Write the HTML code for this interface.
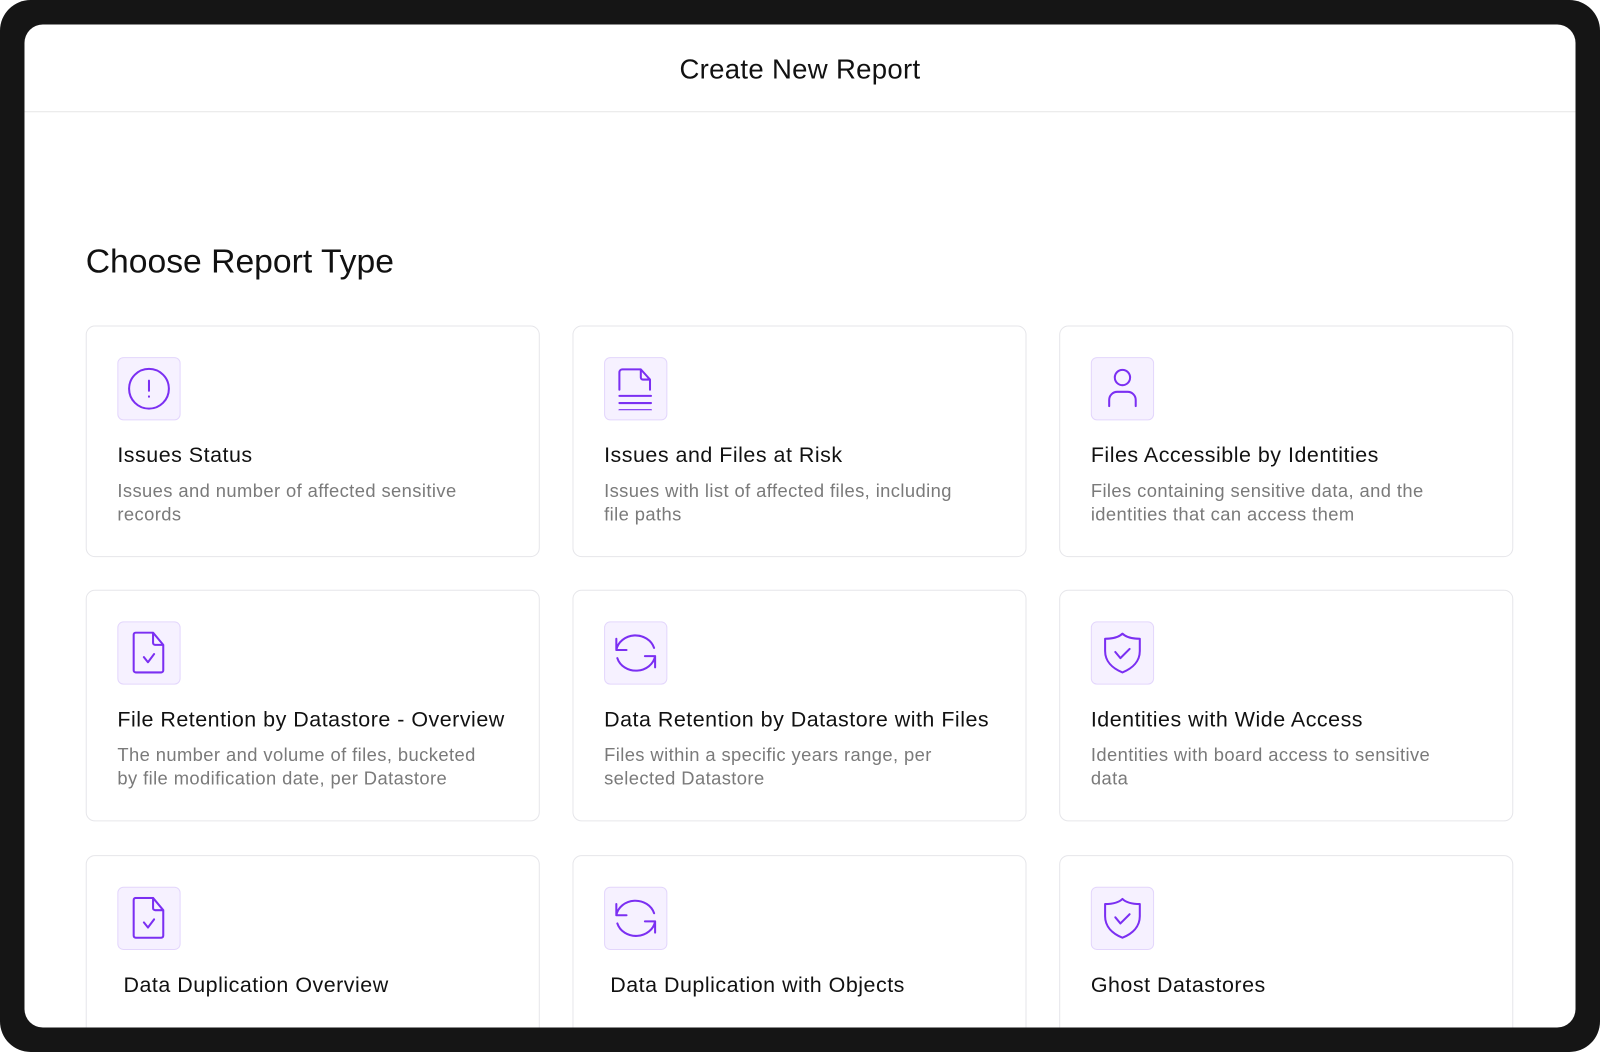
<!DOCTYPE html>
<html><head><meta charset="utf-8"><style>
*{margin:0;padding:0;box-sizing:border-box}
html,body{width:1600px;height:1052px;overflow:hidden;background:#fff}
#s{width:1568px;height:1031px;transform:scale(1.02041,1.02037);transform-origin:0 0;position:relative;background:#151515;border-radius:30px;font-family:"Liberation Sans",sans-serif;overflow:hidden}
.p{position:absolute;left:24px;top:24px;width:1520px;height:983px;background:#fff;border-radius:18px;overflow:hidden}
.h{height:86px;border-bottom:1px solid #e6e6e6;text-align:center;line-height:88px;font-size:27px;color:#111;letter-spacing:.3px}
.t{position:absolute;left:60px;top:213px;font-size:33px;color:#111}
.c{position:absolute;width:445px;height:227px;border:1.5px solid #e6e6ea;border-radius:9px;background:#fff}
.i{position:absolute;left:30px;top:30px;width:62px;height:62px;background:#f6f1ff;border:1.5px solid #e3d6fc;border-radius:6px}
.i svg{position:absolute;left:8.5px;top:8.5px}
.n{position:absolute;left:30px;top:115px;font-size:21px;letter-spacing:.5px;color:#111;white-space:nowrap}
.d{position:absolute;left:30px;top:150px;width:370px;font-size:18px;letter-spacing:.4px;line-height:23px;color:#7a7a7a}
</style></head><body><div id="s"><div class="p">
<div class="h">Create New Report</div>
<div class="t">Choose Report Type</div>

<div class="c" style="left:60px;top:295px"><div class="i"><svg width="42" height="42" viewBox="0 0 42 42" fill="none" stroke="#7b2ff2" stroke-width="2" stroke-linecap="round"><circle cx="21" cy="21" r="19.5"/><path d="M21 13v10M21 28.5v.3"/></svg></div><div class="n">Issues Status</div><div class="d">Issues and number of affected sensitive records</div></div>

<div class="c" style="left:537px;top:295px"><div class="i"><svg width="42" height="42" viewBox="0 0 42 42" fill="none" stroke="#7b2ff2" stroke-width="2" stroke-linecap="round" stroke-linejoin="round"><path d="M5 22V5a3 3 0 0 1 3-3h18l9 10v10M26 2v8a2 2 0 0 0 2 2h7M5 28h31M5 35h31M5 42h31"/></svg></div><div class="n">Issues and Files at Risk</div><div class="d">Issues with list of affected files, including file paths</div></div>

<div class="c" style="left:1014px;top:295px"><div class="i"><svg width="42" height="42" viewBox="0 0 42 42" fill="none" stroke="#7b2ff2" stroke-width="2" stroke-linecap="round"><circle cx="21" cy="10" r="7.5"/><path d="M8 38v-6a8 8 0 0 1 8-8h10a8 8 0 0 1 8 8v6"/></svg></div><div class="n">Files Accessible by Identities</div><div class="d">Files containing sensitive data, and the identities that can access them</div></div>

<div class="c" style="left:60px;top:554px"><div class="i"><svg width="42" height="42" viewBox="0 0 42 42" fill="none" stroke="#7b2ff2" stroke-width="2" stroke-linecap="round" stroke-linejoin="round"><path d="M8 1h17l10 12v25a2 2 0 0 1-2 2H8a2 2 0 0 1-2-2V3a2 2 0 0 1 2-2zM25 1v10a2 2 0 0 0 2 2h8M16 25l4 5 6-8"/></svg></div><div class="n">File Retention by Datastore - Overview</div><div class="d">The number and volume of files, bucketed by file modification date, per Datastore</div></div>

<div class="c" style="left:537px;top:554px"><div class="i"><svg width="42" height="42" viewBox="0 0 42 42" fill="none" stroke="#7b2ff2" stroke-width="2" stroke-linecap="round" stroke-linejoin="round"><path d="M2 18A19 17 0 0 1 39 16M40 24A19 17 0 0 1 3 26M2 7v11h10M40 35V24H30"/></svg></div><div class="n">Data Retention by Datastore with Files</div><div class="d">Files within a specific years range, per selected Datastore</div></div>

<div class="c" style="left:1014px;top:554px"><div class="i"><svg width="42" height="42" viewBox="0 0 42 42" fill="none" stroke="#7b2ff2" stroke-width="2" stroke-linecap="round" stroke-linejoin="round"><path d="M21 2c-4 4-10 5-17 5v12c0 10 7 17 17 21 10-4 17-11 17-21V7c-7 0-13-1-17-5zM14 20l5 6 9-9"/></svg></div><div class="n">Identities with Wide Access</div><div class="d">Identities with board access to sensitive data</div></div>

<div class="c" style="left:60px;top:814px"><div class="i"><svg width="42" height="42" viewBox="0 0 42 42" fill="none" stroke="#7b2ff2" stroke-width="2" stroke-linecap="round" stroke-linejoin="round"><path d="M8 1h17l10 12v25a2 2 0 0 1-2 2H8a2 2 0 0 1-2-2V3a2 2 0 0 1 2-2zM25 1v10a2 2 0 0 0 2 2h8M16 25l4 5 6-8"/></svg></div><div class="n" style="left:36px">Data Duplication Overview</div></div>

<div class="c" style="left:537px;top:814px"><div class="i"><svg width="42" height="42" viewBox="0 0 42 42" fill="none" stroke="#7b2ff2" stroke-width="2" stroke-linecap="round" stroke-linejoin="round"><path d="M2 18A19 17 0 0 1 39 16M40 24A19 17 0 0 1 3 26M2 7v11h10M40 35V24H30"/></svg></div><div class="n" style="left:36px">Data Duplication with Objects</div></div>

<div class="c" style="left:1014px;top:814px"><div class="i"><svg width="42" height="42" viewBox="0 0 42 42" fill="none" stroke="#7b2ff2" stroke-width="2" stroke-linecap="round" stroke-linejoin="round"><path d="M21 2c-4 4-10 5-17 5v12c0 10 7 17 17 21 10-4 17-11 17-21V7c-7 0-13-1-17-5zM14 20l5 6 9-9"/></svg></div><div class="n">Ghost Datastores</div></div>

</div></div></body></html>
